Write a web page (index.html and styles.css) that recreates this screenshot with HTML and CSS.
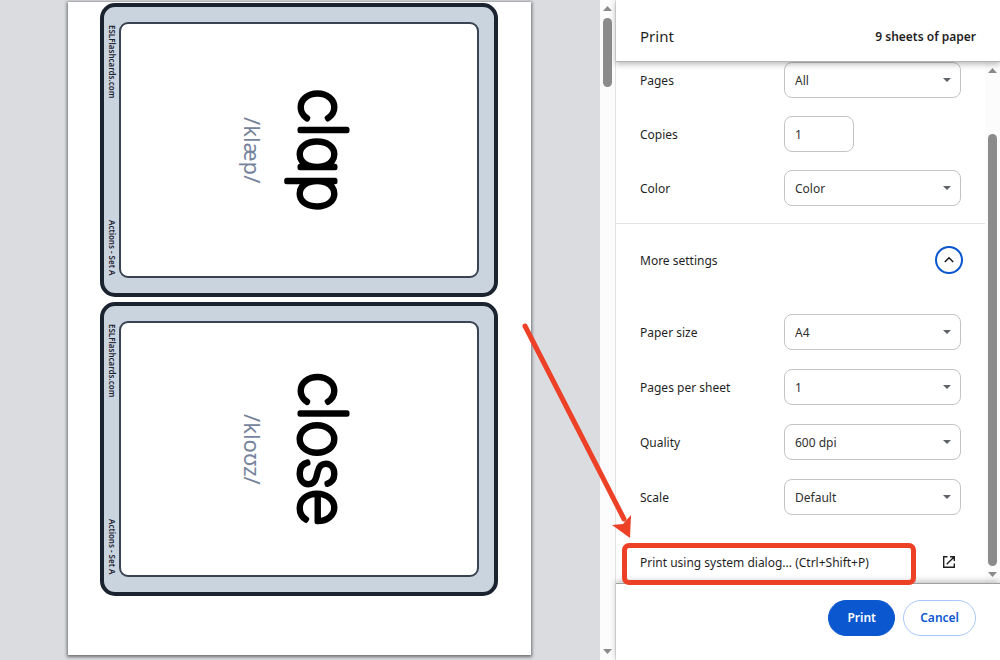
FILE: index.html
```html
<!DOCTYPE html>
<html lang="en">
<head>
<meta charset="utf-8">
<title>Print</title>
<link rel="stylesheet" href="styles.css">
</head>
<body>
<div class="dialog">
  <main class="preview">
    <div class="paper">
      <section class="card">
        <div class="card-edge"><span>ESLFlashcards.com</span><span>Actions - Set A</span></div>
        <div class="card-face"><svg class="word" viewBox="0 0 80 180"><text transform="translate(19 90) rotate(90)">clap</text></svg><p class="ipa">/klæp/</p></div>
      </section>
      <section class="card">
        <div class="card-edge"><span>ESLFlashcards.com</span><span>Actions - Set A</span></div>
        <div class="card-face"><svg class="word" viewBox="0 0 80 180"><text transform="translate(19 90) rotate(90)">close</text></svg><p class="ipa">/kloʊz/</p></div>
      </section>
    </div>
  </main>
  <div class="scrollbar scrollbar-preview">
    <svg class="scroll-arrow" viewBox="0 0 9 5"><path d="M0 5 4.500 0 9 5z"/></svg>
    <div class="track"><div class="thumb"></div></div>
    <svg class="scroll-arrow" viewBox="0 0 9 5"><path d="M0 0h9L4.500 5z"/></svg>
  </div>
  <aside class="sidebar">
    <header class="header"><h1>Print</h1><span class="count">9 sheets of paper</span></header>
    <div class="body">
      <div class="settings">
        <div class="group">
          <div class="row"><label for="pages">Pages</label><div class="select"><select id="pages"><option>All</option></select><svg viewBox="0 0 8 4"><path d="M0 0h8L4 4z"/></svg></div></div>
          <div class="row"><label for="copies">Copies</label><div class="field"><input id="copies" type="text" value="1"></div></div>
          <div class="row"><label for="color">Color</label><div class="select"><select id="color"><option>Color</option></select><svg viewBox="0 0 8 4"><path d="M0 0h8L4 4z"/></svg></div></div>
        </div>
        <div class="more"><span id="more-label">More settings</span>
          <button class="expand" type="button" aria-labelledby="more-label" aria-expanded="true"><svg viewBox="0 0 12 12"><path d="M1.800 8 6 3.800 10.200 8"/></svg></button>
        </div>
        <div class="group group-more">
          <div class="row"><label for="paper">Paper size</label><div class="select"><select id="paper"><option>A4</option></select><svg viewBox="0 0 8 4"><path d="M0 0h8L4 4z"/></svg></div></div>
          <div class="row"><label for="per-sheet">Pages per sheet</label><div class="select"><select id="per-sheet"><option>1</option></select><svg viewBox="0 0 8 4"><path d="M0 0h8L4 4z"/></svg></div></div>
          <div class="row"><label for="quality">Quality</label><div class="select"><select id="quality"><option>600 dpi</option></select><svg viewBox="0 0 8 4"><path d="M0 0h8L4 4z"/></svg></div></div>
          <div class="row"><label for="scale">Scale</label><div class="select"><select id="scale"><option>Default</option></select><svg viewBox="0 0 8 4"><path d="M0 0h8L4 4z"/></svg></div></div>
        </div>
        <div class="system">
          <a href="#system-dialog"><span>Print using system dialog... (Ctrl+Shift+P)</span>
            <svg class="launch" viewBox="0 0 14 14"><path d="M5.500 1.700H1.700v10.600h10.600V8.500M8 1.700h4.300V6M12.300 1.700 4.700 9.300"/></svg></a>
          <div class="highlight"></div>
          <svg class="pointer" viewBox="0 0 120 220"><path class="shaft" d="M8 7 107 200"/><path class="head" d="M113 219 95 206l11-1 8-9z"/></svg>
        </div>
      </div>
      <div class="scrollbar scrollbar-settings">
        <svg class="scroll-arrow" viewBox="0 0 9 5"><path d="M0 5 4.500 0 9 5z"/></svg>
        <div class="track"><div class="thumb"></div></div>
        <svg class="scroll-arrow" viewBox="0 0 9 5"><path d="M0 0h9L4.500 5z"/></svg>
      </div>
    </div>
    <footer class="footer"><button class="btn primary" type="button">Print</button><button class="btn" type="button">Cancel</button></footer>
  </aside>
</div>
</body>
</html>
```
FILE: styles.css
```css
* { box-sizing: border-box; }
body {
  margin: 0;
  background: #fff;
  color: #1f1f1f;
  font: 12px/20px "Noto Sans", "Open Sans", sans-serif;
}
h1, p { margin: 0; }
.dialog { display: flex; min-height: 100vh; }

/* Preview */
.preview {
  flex: 1;
  min-width: 0;
  background: #dadce0;
  padding: 2px 69px 5px 68px;
}
.paper {
  display: flex;
  flex-direction: column;
  gap: 5px;
  height: 100%;
  padding: 1px 33px 59px 32px;
  background: #fff;
  box-shadow: 0 1px 3px 1px rgba(0, 0, 0, .5);
}
.card {
  flex: 1;
  display: flex;
  padding: 15px;
  padding-left: 0;
  background: #cad4de;
  border: 4px solid #1b2230;
  border-radius: 15px;
}
.card-edge {
  display: flex;
  justify-content: space-between;
  writing-mode: vertical-rl;
  width: 15px;
  padding: 3px 0;
  font: 600 8px/14px "Noto Sans", sans-serif;
  color: #1b2230;
}
.card-face {
  flex: 1;
  display: flex;
  flex-direction: row-reverse;
  justify-content: center;
  align-items: center;
  gap: 13px;
  background: #fff;
  border: 2px solid #3a4351;
  border-radius: 9px;
}
.word {
  width: 80px;
  height: 180px;
  overflow: visible;
  fill: #000;
  stroke: #000;
  stroke-width: 5px;
  stroke-linejoin: round;
  text-anchor: middle;
  font: 100 64px Inter, sans-serif;
  font-feature-settings: "cv11" 1;
}
.ipa {
  writing-mode: vertical-rl;
  font: 400 22px/30px "Noto Sans", sans-serif;
  color: #74839b;
}

/* Scrollbars */
.scrollbar {
  flex: none;
  display: flex;
  flex-direction: column;
  align-items: center;
  width: 15px;
  padding: 6px 0;
  background: #fcfcfc;
}
.scroll-arrow { width: 9px; height: 5px; fill: #8b8b8b; }
.track { flex: 1; width: 9px; }
.thumb { background: #8b8b8b; border-radius: 5px; }
.scrollbar-preview .track { padding-top: 7px; }
.scrollbar-preview .thumb { height: 69px; }
.scrollbar-settings .track { display: flex; padding: 61px 0 6px; }
.scrollbar-settings .thumb { flex: 1; }

/* Sidebar */
.sidebar {
  flex: none;
  display: flex;
  flex-direction: column;
  width: 385px;
  border-left: 1px solid #e3e3e3;
}
.header {
  position: relative;
  display: flex;
  align-items: center;
  justify-content: space-between;
  height: 62px;
  padding: 10px 24px 0;
  border-bottom: 1px solid #b5b5b5;
  box-shadow: 0 2px 6px rgba(0, 0, 0, .3);
}
.header h1 { font-size: 15px; font-weight: 400; }
.count { font-weight: 600; }
.count, .row label, .more span, .system span { padding-top: 2px; }
.body { flex: 1; display: flex; }
.settings { flex: 1; }
.group { display: flex; flex-direction: column; gap: 18px; padding: 0 24px 17px; border-bottom: 1px solid #e3e3e3; }
.group-more { gap: 19px; padding: 18px 24px 26px; border: 0; }
.row { display: grid; grid-template-columns: 1fr 177px; align-items: center; height: 36px; }
.select { display: grid; align-items: center; height: 36px; }
.select select, .select svg { grid-area: 1 / 1; }
.select svg { justify-self: end; width: 8px; height: 4px; margin-right: 10px; fill: #5f6368; pointer-events: none; }
select, input {
  appearance: none;
  width: 100%;
  height: 36px;
  padding: 2px 10px 0;
  border: 1px solid #c4c4c4;
  border-radius: 8px;
  background: transparent;
  color: #303030;
  font: inherit;
}
input { padding-top: 0; }
.field { width: 70px; }
.more { display: flex; align-items: center; justify-content: space-between; height: 72px; padding: 0 22px 0 24px; }
.expand {
  display: grid;
  place-items: center;
  width: 28px;
  height: 28px;
  padding: 0;
  border: 2px solid #0b57d0;
  border-radius: 50%;
  background: #fff;
}
.expand svg { width: 12px; height: 12px; fill: none; stroke: #1f1f1f; stroke-width: 1.6; }
.system { position: relative; }
.system a { display: flex; align-items: center; justify-content: space-between; height: 42px; padding: 0 29px 0 24px; color: inherit; text-decoration: none; }
.launch { width: 14px; height: 14px; fill: none; stroke: #1f1f1f; stroke-width: 1.4; }
.highlight {
  position: absolute;
  top: 2px;
  left: 6px;
  width: 294px;
  height: 42px;
  border: 5px solid #ed4127;
  border-radius: 7px;
  pointer-events: none;
}
.pointer { position: absolute; left: -99px; bottom: 44px; width: 120px; height: 220px; pointer-events: none; }
.shaft { fill: none; stroke: #ed4127; stroke-width: 5; stroke-linecap: round; }
.head { fill: #ed4127; }
.footer {
  display: flex;
  justify-content: flex-end;
  gap: 8px;
  height: 77px;
  padding: 16px 24px 0;
  border-top: 1px solid #a0a0a0;
  box-shadow: 0 -2px 6px rgba(0, 0, 0, .25);
}
.btn {
  height: 36px;
  min-width: 67px;
  padding: 0 16px;
  border: 1px solid #a8c7fa;
  border-radius: 18px;
  background: #fff;
  color: #0b57d0;
  font: 600 12px/20px "Noto Sans", sans-serif;
}
.primary { border-color: #0b57d0; background: #0b57d0; color: #fff; }
```
